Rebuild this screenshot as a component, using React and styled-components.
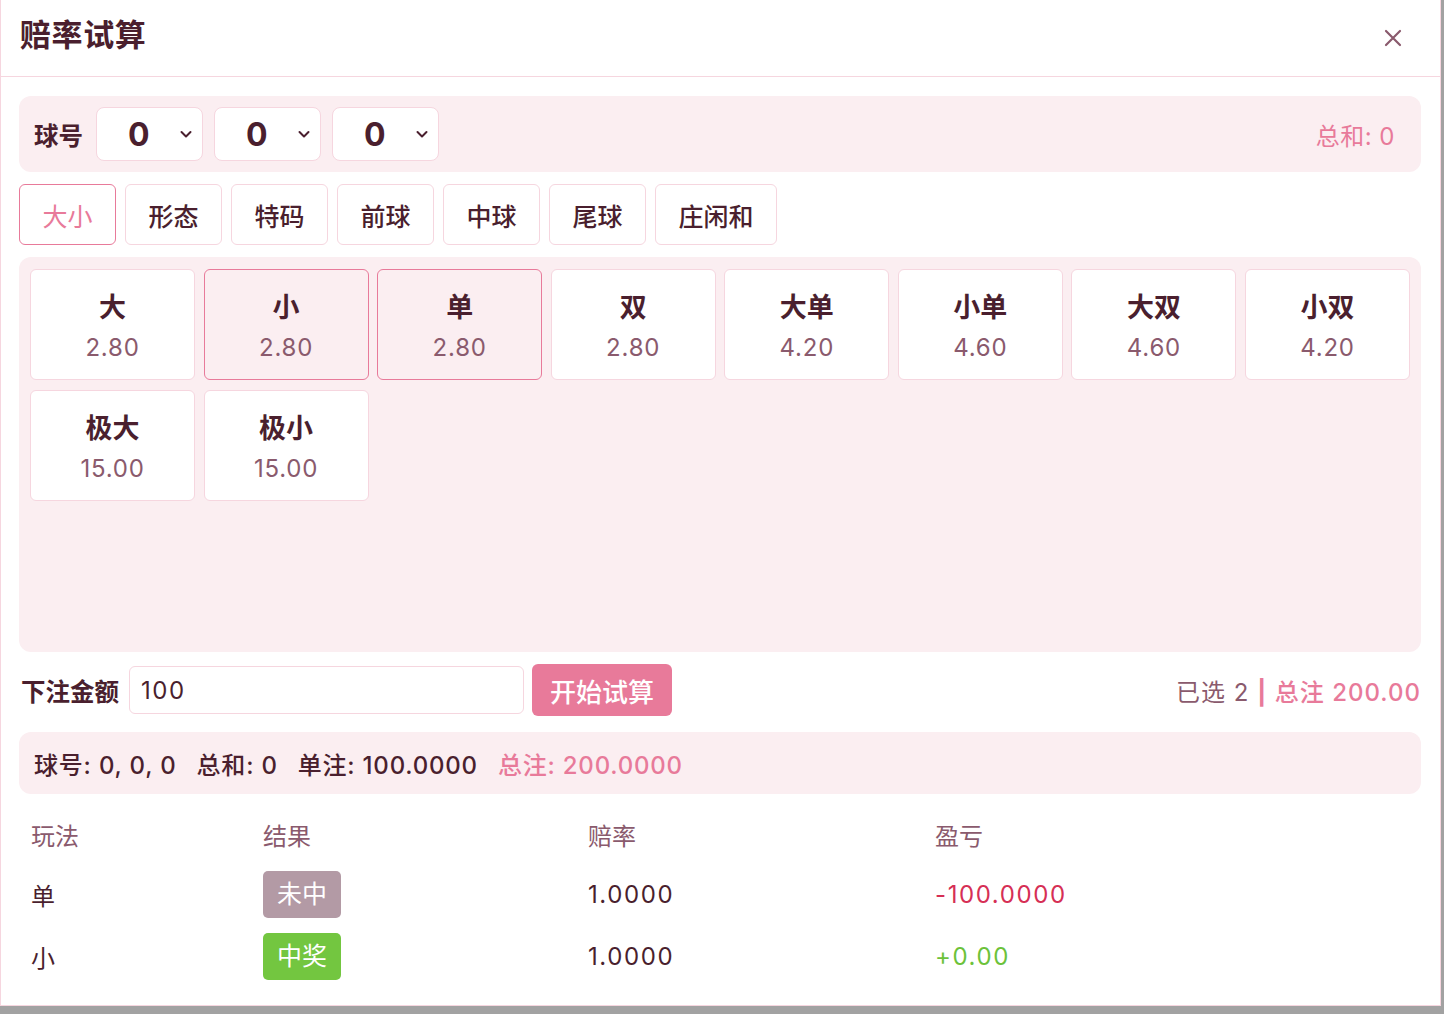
import React from "react";
import styled, { createGlobalStyle } from "styled-components";

const C = {
  text: "#4a1f2e",
  muted: "#8a5a6d",
  pink: "#e87a9a",
  panel: "#fbeef1",
  line: "#f6d6df",
  red: "#d62f55",
  green: "#6cc23a",
};

const Global = createGlobalStyle`
  html, body { margin: 0; padding: 0; background: #a2a2a2; }
  body { font-family: Inter, "Noto Sans CJK SC", sans-serif; color: ${C.text}; }
  * { box-sizing: border-box; }
`;

const Dialog = styled.div`
  width: 1441px;
  height: 1006px;
  background: #fff;
  border: 1px solid ${C.line};
  border-top: none;
  display: flex;
  flex-direction: column;
`;

const Header = styled.div`
  height: 77px;
  border-bottom: 1px solid ${C.line};
  display: flex;
  align-items: center;
  justify-content: space-between;
  padding: 0 37px 0 19px;
`;

const Title = styled.h2`
  margin: 0 0 11px;
  font-size: 31px;
  font-weight: 700;
  letter-spacing: 0.6px;
`;

const Close = styled.button`
  border: none;
  background: none;
  padding: 0;
  display: flex;
  cursor: pointer;
`;

const Body = styled.div`
  padding: 19px 19px 0 18px;
  display: flex;
  flex-direction: column;
`;

const Panel = styled.div`
  background: ${C.panel};
  border-radius: 12px;
`;

const BallBar = styled(Panel)`
  height: 76px;
  display: flex;
  align-items: center;
  padding: 0 26px 0 15px;
  gap: 11px;
`;

const Label = styled.span`
  font-size: 24.5px;
  font-weight: 700;
  margin-right: 2px;
`;

const Select = styled.div`
  width: 107px;
  height: 54px;
  background: #fff;
  border: 1px solid ${C.line};
  border-radius: 8px;
  display: flex;
  align-items: center;
  justify-content: space-between;
  padding: 0 9px 0 31px;
  font-size: 32px;
  font-weight: 700;
`;

const Sum = styled.span`
  margin-left: auto;
  color: ${C.pink};
  font-size: 24px;
  letter-spacing: 0.5px;
`;

const Tabs = styled.div`
  display: flex;
  gap: 9px;
  margin-top: 12px;
`;

const Tab = styled.div`
  height: 61px;
  padding: 0 22.5px;
  display: flex;
  align-items: center;
  justify-content: center;
  font-size: 25px;
  font-weight: ${({ $active }) => ($active ? 400 : 500)};
  color: ${({ $active }) => ($active ? C.pink : C.text)};
  background: #fff;
  border: 1px solid ${({ $active }) => ($active ? C.pink : C.line)};
  border-radius: 6px;
`;

const Options = styled(Panel)`
  margin-top: 12px;
  height: 395px;
  padding: 12px 11px;
  display: grid;
  grid-template-columns: repeat(8, 1fr);
  grid-auto-rows: 111px;
  gap: 10px 8.5px;
  align-content: start;
`;

const Card = styled.div`
  background: ${({ $on }) => ($on ? C.panel : "#fff")};
  border: 1px solid ${({ $on }) => ($on ? C.pink : C.line)};
  border-radius: 6px;
  display: flex;
  flex-direction: column;
  align-items: center;
  justify-content: center;
  gap: 6px;
  padding-top: 4px;
`;

const CardName = styled.div`
  font-size: 27px;
  font-weight: 700;
  line-height: 36px;
`;

const CardOdds = styled.div`
  font-size: 24px;
  color: ${C.muted};
  line-height: 32px;
  letter-spacing: 0.8px;
`;

const AmountRow = styled.div`
  display: flex;
  align-items: center;
  margin-top: 12px;
  height: 52px;
  gap: 8px;
  padding-left: 2px;
`;

const Input = styled.input`
  width: 395px;
  height: 48px;
  border: 1px solid ${C.line};
  border-radius: 6px;
  padding: 0 11px;
  font-family: inherit;
  font-size: 24px;
  letter-spacing: 1.5px;
  color: ${C.text};
  outline: none;
`;

const Primary = styled.button`
  height: 52px;
  padding: 0 18px;
  border: none;
  border-radius: 6px;
  background: ${C.pink};
  color: #fff;
  font-family: inherit;
  font-size: 26px;
  font-weight: 500;
`;

const Stat = styled.div`
  margin-left: auto;
  font-size: 24px;
  color: ${C.muted};
  letter-spacing: 1px;
`;

const Pink = styled.span`
  color: ${C.pink};
  font-weight: ${({ $bold }) => ($bold ? 700 : 500)};
`;

const Summary = styled(Panel)`
  margin-top: 16px;
  height: 62px;
  display: flex;
  align-items: center;
  gap: 20px;
  padding: 0 15px;
  font-size: 24px;
  font-weight: 500;
  letter-spacing: 0.8px;
`;

const Table = styled.div`
  margin-top: 13px;
  display: grid;
  grid-template-columns: 232px 325px 347px 1fr;
  grid-template-rows: 56px;
  grid-auto-rows: 62px;
  align-items: center;
  font-size: 24px;
  & > * { padding-left: 12px; }
`;

const Th = styled.div`
  color: ${C.muted};
  padding-bottom: 2px;
`;

const Num = styled.div`
  letter-spacing: 1.6px;
  color: ${({ $tone }) => ($tone === "win" ? C.green : $tone === "lose" ? C.red : C.text)};
`;

const Badge = styled.span`
  display: inline-block;
  padding: 6px 14px;
  border-radius: 5px;
  color: #fff;
  font-size: 25px;
  background: ${({ $win }) => ($win ? "#73c640" : "#b39aa5")};
  line-height: 35px;
`;

const Chevron = () => (
  <svg width="14" height="14" viewBox="0 0 14 14" fill="none" stroke={C.text} strokeWidth="2" strokeLinecap="round" strokeLinejoin="round">
    <path d="M2.5 5l4.5 4.5L11.5 5" />
  </svg>
);

const XIcon = () => (
  <svg width="20" height="20" viewBox="0 0 20 20" stroke={C.muted} strokeWidth="2.2" strokeLinecap="round">
    <path d="M3 3l14 14M17 3L3 17" />
  </svg>
);

const tabs = ["大小", "形态", "特码", "前球", "中球", "尾球", "庄闲和"];
const options = [
  ["大", "2.80"], ["小", "2.80", true], ["单", "2.80", true], ["双", "2.80"],
  ["大单", "4.20"], ["小单", "4.60"], ["大双", "4.60"], ["小双", "4.20"],
  ["极大", "15.00"], ["极小", "15.00"],
];
const results = [
  { name: "单", win: false, odds: "1.0000", money: "-100.0000" },
  { name: "小", win: true, odds: "1.0000", money: "+0.00" },
];

export default function App() {
  return (
    <>
      <Global />
      <Dialog>
        <Header>
          <Title>赔率试算</Title>
          <Close aria-label="close"><XIcon /></Close>
        </Header>
        <Body>
          <BallBar>
            <Label>球号</Label>
            {[0, 0, 0].map((n, i) => (
              <Select key={i}>
                {n}
                <Chevron />
              </Select>
            ))}
            <Sum>总和: 0</Sum>
          </BallBar>

          <Tabs>
            {tabs.map((t, i) => (
              <Tab key={t} $active={i === 0}>{t}</Tab>
            ))}
          </Tabs>

          <Options>
            {options.map(([name, odds, on]) => (
              <Card key={name} $on={on}>
                <CardName>{name}</CardName>
                <CardOdds>{odds}</CardOdds>
              </Card>
            ))}
          </Options>

          <AmountRow>
            <Label>下注金额</Label>
            <Input defaultValue="100" />
            <Primary>开始试算</Primary>
            <Stat>
              已选 2 <Pink $bold>|</Pink> <Pink>总注 200.00</Pink>
            </Stat>
          </AmountRow>

          <Summary>
            <span>球号: 0, 0, 0</span>
            <span>总和: 0</span>
            <span>单注: 100.0000</span>
            <Pink>总注: 200.0000</Pink>
          </Summary>

          <Table>
            <Th>玩法</Th>
            <Th>结果</Th>
            <Th>赔率</Th>
            <Th>盈亏</Th>
            {results.map((r) => (
              <React.Fragment key={r.name}>
                <div>{r.name}</div>
                <div><Badge $win={r.win}>{r.win ? "中奖" : "未中"}</Badge></div>
                <Num>{r.odds}</Num>
                <Num $tone={r.win ? "win" : "lose"}>{r.money}</Num>
              </React.Fragment>
            ))}
          </Table>
        </Body>
      </Dialog>
    </>
  );
}
